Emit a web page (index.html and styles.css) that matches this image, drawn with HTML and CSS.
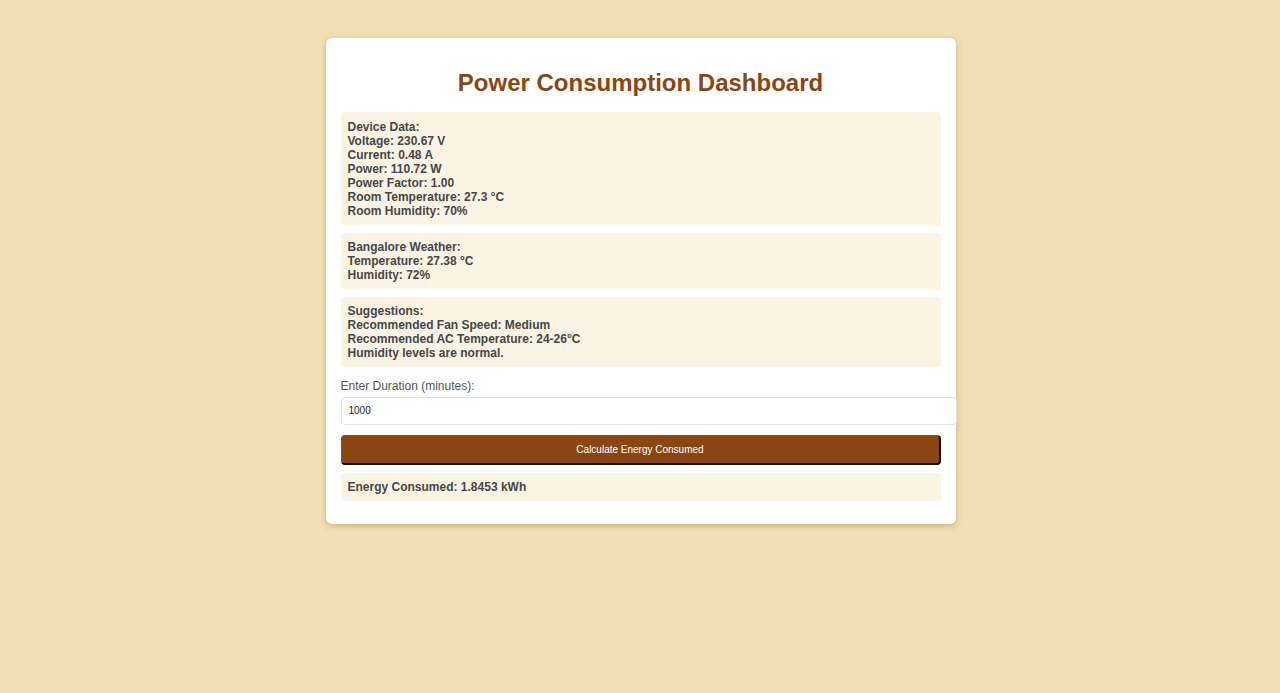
FILE: index.html
```html
<!DOCTYPE html>
<html lang="en">
<head>
<meta charset="utf-8">
<title>Power Consumption Dashboard</title>
<link rel="stylesheet" href="styles.css">
</head>
<body>
<div class="card">
  <h1 class="title">Power Consumption Dashboard</h1>
  <div class="box box-first">
    Device Data:<br>
    Voltage: 230.67 V<br>
    Current: 0.48 A<br>
    Power: 110.72 W<br>
    Power Factor: 1.00<br>
    Room Temperature: 27.3 °C<br>
    Room Humidity: 70%
  </div>
  <div class="box">
    Bangalore Weather:<br>
    Temperature: 27.38 °C<br>
    Humidity: 72%
  </div>
  <div class="box">
    Suggestions:<br>
    Recommended Fan Speed: Medium<br>
    Recommended AC Temperature: 24-26°C<br>
    Humidity levels are normal.
  </div>
  <label class="label" for="duration">Enter Duration (minutes):</label>
  <input class="input" id="duration" type="number" value="1000">
  <button class="btn" type="button">Calculate Energy Consumed</button>
  <div class="box">Energy Consumed: 1.8453 kWh</div>
</div>
</body>
</html>
```

FILE: styles.css
```css
html, body {
  margin: 0;
  padding: 0;
}
body {
  background: #f3dfb4;
  font-family: "Liberation Sans", Arial, sans-serif;
  padding: 38px 0 0 1px;
  min-height: 693px;
  box-sizing: border-box;
}
.card {
  width: 600px;
  margin: 0 auto;
  padding: 15px;
  background: #fff;
  border-radius: 6px;
  box-shadow: 0 2px 6px rgba(120, 90, 40, 0.35);
}
.title {
  margin: 16px 0 15px;
  text-align: center;
  font-size: 24px;
  line-height: 28px;
  font-weight: bold;
  color: #8b4513;
}
.box {
  background: #fbf3e4;
  border-radius: 4px;
  padding: 7px;
  margin-bottom: 8px;
  font-size: 12px;
  line-height: 14px;
  font-weight: bold;
  color: #474747;
}
.box-first {
  padding-top: 8px;
}
.label {
  display: block;
  margin-top: 12px;
  font-size: 12px;
  line-height: 14px;
  color: #555;
}
.input {
  display: block;
  width: 100%;
  margin: 4px 0 10px;
  padding: 7px;
  box-sizing: content-box;
  height: 12px;
  border: 1px solid #e2e2e2;
  border-radius: 4px;
  font-family: "Liberation Sans", Arial, sans-serif;
  font-size: 10px;
  line-height: 12px;
  color: #222;
  background: #fff;
  outline: none;
}
.input::-webkit-inner-spin-button,
.input::-webkit-outer-spin-button {
  -webkit-appearance: none;
  margin: 0;
}
.btn {
  display: block;
  width: 100%;
  height: 30px;
  margin: 0 0 8px;
  padding: 0;
  background: #8b4513;
  color: #fff;
  font-family: "Liberation Sans", Arial, sans-serif;
  font-size: 10px;
  border-style: solid;
  border-width: 1px 2px 2px 1px;
  border-color: #6e5a48 #111 #111 #6e5a48;
  border-radius: 4px;
  cursor: pointer;
}
```
